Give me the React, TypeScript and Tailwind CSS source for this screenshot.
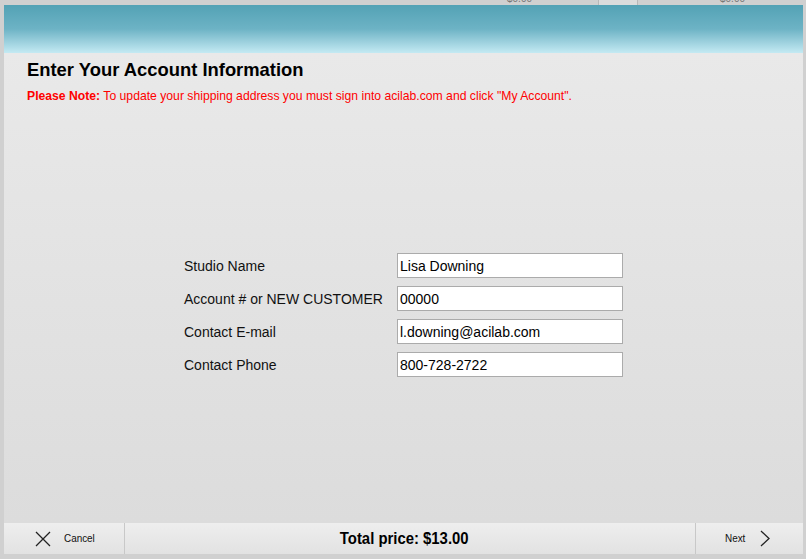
import React from "react";

const fieldRows = [
  { label: "Studio Name", value: "Lisa Downing" },
  { label: "Account # or NEW CUSTOMER", value: "00000" },
  { label: "Contact E-mail", value: "l.downing@acilab.com" },
  { label: "Contact Phone", value: "800-728-2722" },
];

export default function App() {
  return (
    <div
      className="w-[806px] h-[559px] bg-[#d0d0d0] overflow-hidden flex flex-col"
      style={{ fontFamily: '"Liberation Sans", Arial, sans-serif' }}
    >
      {/* strip of table behind dialog */}
      <div className="h-[5px] relative flex">
        <div className="w-[507px]" />
        <div className="text-[10px] leading-[10px] text-[#777] -mt-[6px] w-[91px]">$0.00</div>
        <div className="w-[40px] h-[5px] bg-[#dcdcdc] border-x border-[#b8b8b8]" />
        <div className="w-[82px]" />
        <div className="text-[10px] leading-[10px] text-[#777] -mt-[6px]">$0.00</div>
      </div>

      <div className="flex h-[549px]">
        <div className="w-[4px]" />
        <div className="w-[799px] flex flex-col">
          {/* header */}
          <div className="h-[48px] bg-gradient-to-b from-[#53a2b5] via-[#6db3c5] to-[#c4eaf3]" />

          {/* main */}
          <div className="flex-1 bg-gradient-to-b from-[#e9e9e9] to-[#dcdcdc] flex flex-col">
            <div className="pl-[23px] pt-[6px]">
              <h1 className="text-[18.4px] leading-[21px] font-bold text-black">
                Enter Your Account Information
              </h1>
              <p className="mt-[9px] text-[12.2px] leading-[14px] text-[#ff0000]">
                <span className="font-bold">Please Note:</span> To update your shipping address you must
                sign into acilab.com and click "My Account".
              </p>
            </div>

            <div className="mt-[150px] flex justify-center">
              <div className="grid grid-cols-[213px_226px] gap-y-[8px]">
                {fieldRows.map((r) => (
                  <React.Fragment key={r.label}>
                    <div className="h-[25px] flex items-center pt-[1px] text-[14px] text-[#111]">{r.label}</div>
                    <div className="h-[25px] bg-white border border-[#ababab] flex items-center pt-[1px] px-[2px] text-[14px] text-black">
                      {r.value}
                    </div>
                  </React.Fragment>
                ))}
              </div>
            </div>
          </div>

          {/* footer */}
          <div className="h-[31px] flex bg-gradient-to-b from-[#eeeeee] to-[#e2e2e2]">
            <div className="w-[121px] border-r border-[#c8c8c8] flex items-center">
              <svg width="16" height="16" viewBox="0 0 16 16" className="ml-[31px]">
                <path d="M1 1 L15 15 M15 1 L1 15" stroke="#222" strokeWidth="1.3" fill="none" />
              </svg>
              <span className="ml-[13px] text-[11px] text-[#111] inline-block scale-x-[0.9] origin-left">Cancel</span>
            </div>
            <div className="flex-1 flex items-center justify-center pr-[11px]">
              <span className="text-[16px] font-bold text-black inline-block scale-x-[0.93]">Total price: $13.00</span>
            </div>
            <div className="w-[108px] border-l border-[#c8c8c8] flex items-center">
              <span className="ml-[29px] text-[11px] text-[#111] inline-block scale-x-[0.9] origin-left">Next</span>
              <svg width="10" height="17" viewBox="0 0 10 17" className="ml-[12px]">
                <path d="M1 1 L9 8.5 L1 16" stroke="#222" strokeWidth="1.3" fill="none" />
              </svg>
            </div>
          </div>
        </div>
      </div>
    </div>
  );
}
